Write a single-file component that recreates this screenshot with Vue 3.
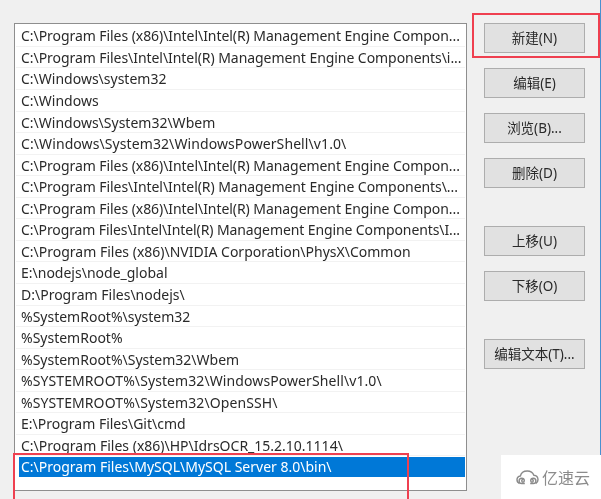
<script setup>
const narrow = 'narrow'
const wide = 'wide'
const rows = [
  { text: 'C:\\Program Files (x86)\\Intel\\Intel(R) Management Engine Compon...', cls: narrow },
  { text: 'C:\\Program Files\\Intel\\Intel(R) Management Engine Components\\i...', cls: narrow },
  { text: 'C:\\Windows\\system32' },
  { text: 'C:\\Windows' },
  { text: 'C:\\Windows\\System32\\Wbem' },
  { text: 'C:\\Windows\\System32\\WindowsPowerShell\\v1.0\\', cls: wide },
  { text: 'C:\\Program Files (x86)\\Intel\\Intel(R) Management Engine Compon...', cls: narrow },
  { text: 'C:\\Program Files\\Intel\\Intel(R) Management Engine Components\\...', cls: narrow },
  { text: 'C:\\Program Files (x86)\\Intel\\Intel(R) Management Engine Compon...', cls: narrow },
  { text: 'C:\\Program Files\\Intel\\Intel(R) Management Engine Components\\I...', cls: 'narrower' },
  { text: 'C:\\Program Files (x86)\\NVIDIA Corporation\\PhysX\\Common' },
  { text: 'E:\\nodejs\\node_global' },
  { text: 'D:\\Program Files\\nodejs\\' },
  { text: '%SystemRoot%\\system32' },
  { text: '%SystemRoot%' },
  { text: '%SystemRoot%\\System32\\Wbem' },
  { text: '%SYSTEMROOT%\\System32\\WindowsPowerShell\\v1.0\\', cls: wide },
  { text: '%SYSTEMROOT%\\System32\\OpenSSH\\', cls: wide },
  { text: 'E:\\Program Files\\Git\\cmd' },
  { text: 'C:\\Program Files (x86)\\HP\\IdrsOCR_15.2.10.1114\\' },
  { text: 'C:\\Program Files\\MySQL\\MySQL Server 8.0\\bin\\', cls: 'selected' }
]
const buttonGroups = [
  ['新建(N)', '编辑(E)', '浏览(B)...', '删除(D)'],
  ['上移(U)', '下移(O)'],
  ['编辑文本(T)...']
]
</script>

<template>
  <div class="page">
    <div class="list">
      <div v-for="(row, i) in rows" :key="i" class="row" :class="row.cls">{{ row.text }}</div>
    </div>
    <div class="side">
      <div v-for="(group, g) in buttonGroups" :key="g" class="group">
        <div v-for="b in group" :key="b" class="btn">{{ b }}</div>
      </div>
    </div>

    <div class="mark mark-top"></div>
    <div class="mark mark-bottom"></div>
    <div class="edge"></div>
    <div class="logo">
      <svg width="23" height="15" viewBox="0 0 23 15" fill="none" stroke="#8a8a8a" stroke-width="1.4">
        <path d="M3.500 13.500C1.800 12.800 1 11.400 1 9.800 1 7.800 2.500 6.300 4.400 6 5 3 7.800 1 11.300 1c3 0 5.600 1.600 6.500 4.200 2.400.2 4.200 2.200 4.200 4.600 0 1.700-.9 3-2.300 3.700" />
        <path d="M7 9.500a1.300 1.300 0 1 0 1.300 1.300 2.600 2.600 0 1 0-2.600 2.700h3.100" />
        <path d="M16 9.500a1.300 1.300 0 1 1-1.300 1.300 2.600 2.600 0 1 1 2.600 2.700h-3.100" />
      </svg>
      <span>亿速云</span>
    </div>
  </div>
</template>

<style scoped>
.page {
  position: relative;
  width: 601px;
  height: 499px;
  box-sizing: border-box;
  padding: 23px 0 0 14px;
  overflow: hidden;
  background: #f0f0f0;
  display: flex;
  align-items: flex-start;
  font-family: "Noto Sans", "Noto Sans CJK SC", sans-serif;
  font-size: 14px;
  color: #2a2a2a;
  filter: blur(0.3px);
}
.list {
  width: 453px;
  height: 468px;
  box-sizing: border-box;
  padding: 1.4px 1px 0 1px;
  flex: none;
  background: #fff;
  border: 1px solid #8e8e8e;
}
.row {
  height: 21.55px;
  box-sizing: border-box;
  padding-left: 5px;
  line-height: 21px;
  white-space: nowrap;
  overflow: hidden;
  border-bottom: 1px solid #f2f2f2;
}
.narrow {
  letter-spacing: -0.06px;
}
.narrower {
  letter-spacing: -0.1px;
}
.wide {
  letter-spacing: 0.09px;
}
.row.selected {
  margin: 0.6px 0 0 3px;
  padding-left: 2px;
  height: 20.5px;
  line-height: 20px;
  background: #0078d7;
  color: #fff;
  border-bottom: none;
}
.side {
  margin-left: 17px;
  width: 101px;
  display: flex;
  flex-direction: column;
  gap: 38px;
}
.group {
  display: flex;
  flex-direction: column;
  gap: 15px;
}
.btn {
  height: 30px;
  box-sizing: border-box;
  border: 1px solid #adadad;
  background: #e1e1e1;
  text-align: center;
  line-height: 28px;
  font-size: 13.5px;
}
.mark {
  position: absolute;
  border: 2px solid #ef4050;
  box-sizing: border-box;
}
.mark-top {
  left: 472px;
  top: 13px;
  width: 128px;
  height: 45px;
}
.mark-bottom {
  left: 13px;
  top: 453px;
  width: 396px;
  height: 52px;
}
.edge {
  position: absolute;
  left: 600px;
  top: 0;
  width: 1px;
  height: 455px;
  background: #4a90d0;
}
.logo {
  position: absolute;
  left: 501px;
  top: 455px;
  width: 100px;
  height: 44px;
  background: #fff;
  display: flex;
  align-items: center;
  padding-left: 15px;
  box-sizing: border-box;
  gap: 3px;
  color: #8c8c8c;
  font-size: 16px;
}
</style>
